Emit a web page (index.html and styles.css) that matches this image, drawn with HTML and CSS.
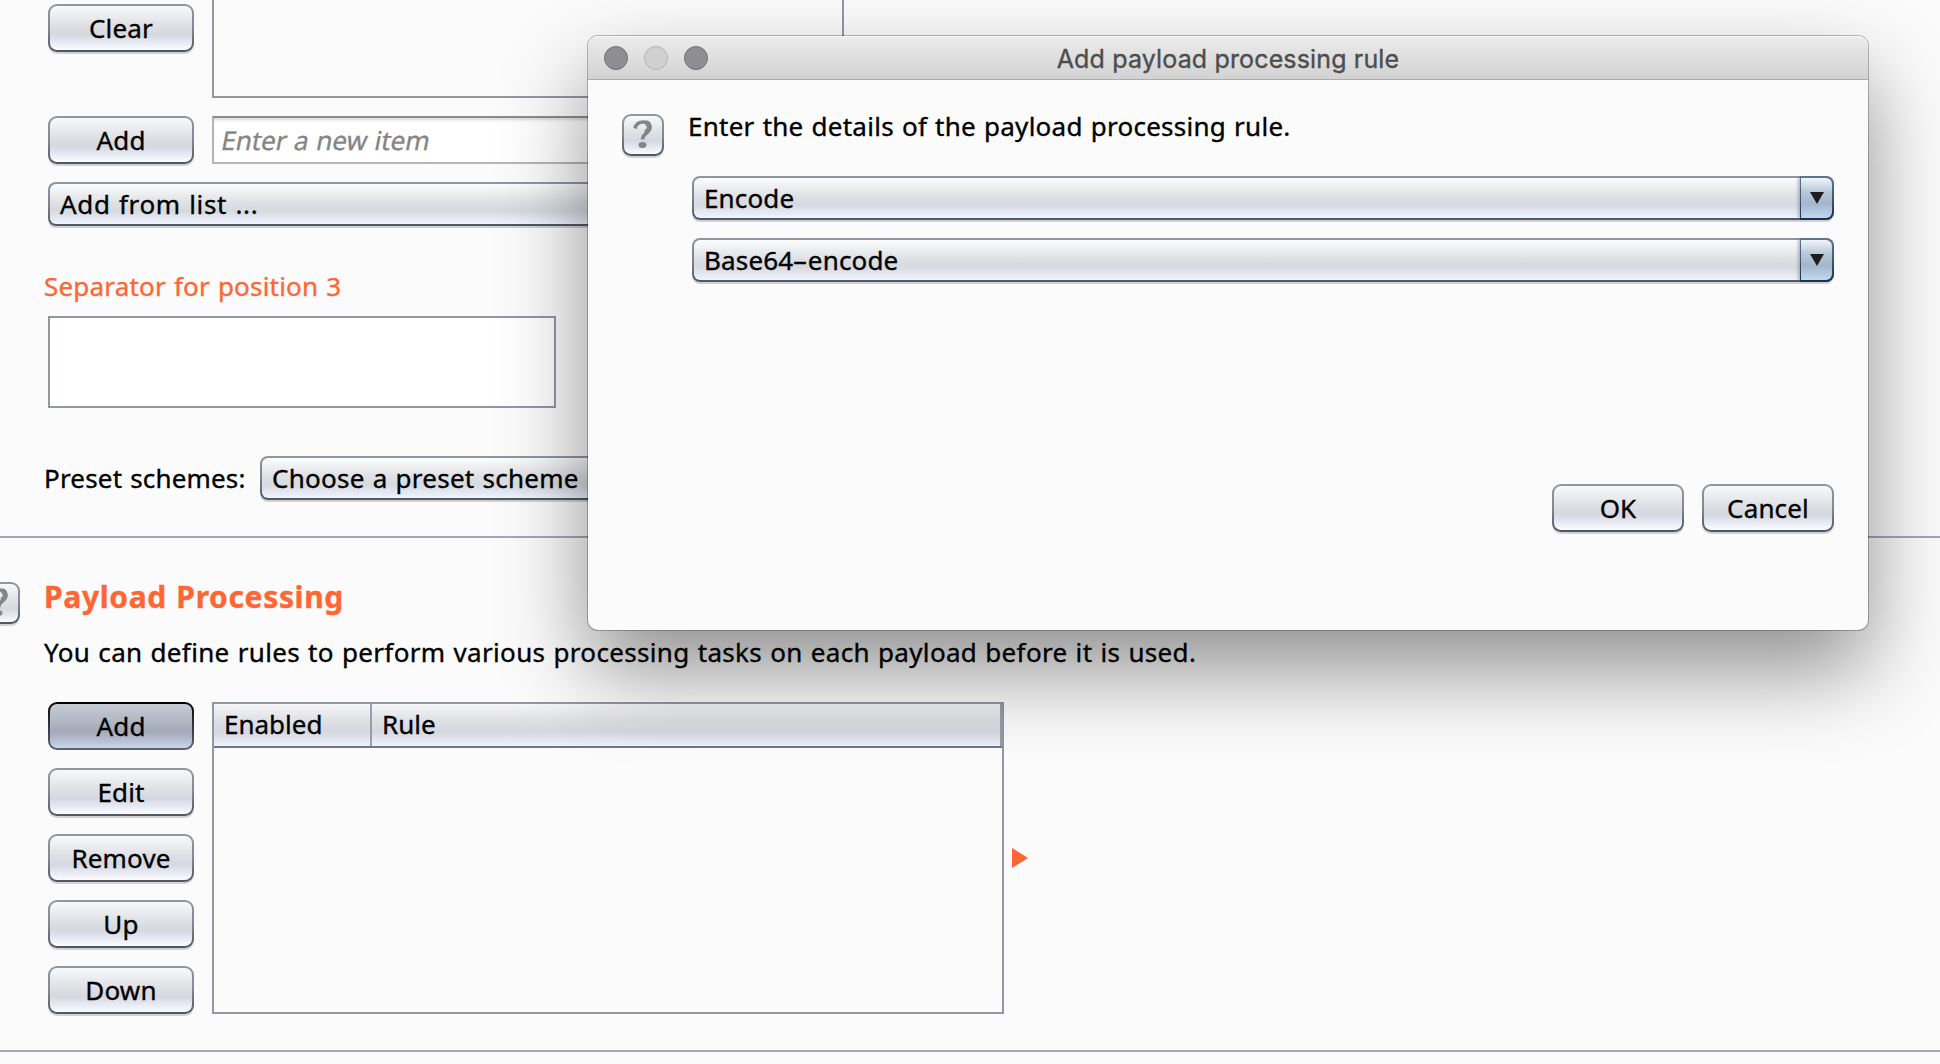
FILE: index.html
```
<!DOCTYPE html>
<html lang="en">
<head>
<meta charset="utf-8">
<title>Payload Processing</title>
<link rel="stylesheet" href="styles.css">
</head>
<body>
<main class="page">
  <section class="payload-set">
    <div class="row list-row">
      <button class="btn">Clear</button>
      <div class="item-list"></div>
    </div>
    <div class="row add-row">
      <button class="btn">Add</button>
      <div class="text-field"><span class="placeholder">Enter a new item</span></div>
    </div>
    <div class="select add-from"><span class="dots">Add from list ...</span></div>
    <h3 class="sub-title">Separator for position 3</h3>
    <div class="separator-box"></div>
    <div class="row preset-row">
      <span class="label">Preset schemes:</span>
      <div class="select preset">Choose a preset scheme</div>
    </div>
  </section>
  <hr class="rule">
  <section class="processing">
    <button class="help help-edge" aria-label="Help">
      <svg width="20" height="28" viewBox="0 0 20 28"><path d="M2 8.500C3 4 6 2 10.500 2C14.500 2 17 4 17 7.500C17 12.500 9.800 13 9.500 19.500" fill="none" stroke="#858585" stroke-width="3.600"/><path d="M13 2.500C15.500 3.500 16.500 5 16 8C15.500 10 14 11.500 12.500 12.500" fill="none" stroke="#858585" stroke-width="4.600"/><ellipse cx="9.500" cy="25" rx="4" ry="3" fill="#858585"/></svg>
    </button>
    <h2 class="title">Payload Processing</h2>
    <p class="lead">You can define rules to perform various processing tasks on each payload before it is used.</p>
    <div class="row rules">
      <div class="actions">
        <button class="btn pressed">Add</button>
        <button class="btn">Edit</button>
        <button class="btn">Remove</button>
        <button class="btn">Up</button>
        <button class="btn">Down</button>
      </div>
      <div class="table">
        <div class="thead">
          <div class="th th-enabled">Enabled</div>
          <div class="th th-rule">Rule</div>
        </div>
      </div>
      <svg class="arrow" width="16" height="20" viewBox="0 0 16 20"><path d="M0 0L16 10L0 20Z" fill="#ff6633"/></svg>
    </div>
  </section>
  <hr class="rule">
</main>

<div class="dialog">
  <header class="titlebar">
    <div class="lights">
      <span class="light"></span><span class="light off"></span><span class="light"></span>
    </div>
    <div class="dialog-title">Add payload processing rule</div>
  </header>
  <div class="dialog-body">
    <button class="help" aria-label="Help">
      <svg width="20" height="28" viewBox="0 0 20 28"><path d="M2 8.500C3 4 6 2 10.500 2C14.500 2 17 4 17 7.500C17 12.500 9.800 13 9.500 19.500" fill="none" stroke="#858585" stroke-width="3.600"/><path d="M13 2.500C15.500 3.500 16.500 5 16 8C15.500 10 14 11.500 12.500 12.500" fill="none" stroke="#858585" stroke-width="4.600"/><ellipse cx="9.500" cy="25" rx="4" ry="3" fill="#858585"/></svg>
    </button>
    <div class="form">
      <p class="prompt">Enter the details of the payload processing rule.</p>
      <div class="select has-knob"><span class="value">Encode</span>
        <span class="knob"><svg width="14" height="12" viewBox="0 0 14 12"><path d="M0 0H14L7 12Z" fill="#1e1e1e"/></svg></span>
      </div>
      <div class="select has-knob"><span class="value">Base64<span class="dash">-</span>encode</span>
        <span class="knob"><svg width="14" height="12" viewBox="0 0 14 12"><path d="M0 0H14L7 12Z" fill="#1e1e1e"/></svg></span>
      </div>
      <div class="dialog-actions">
        <button class="btn">OK</button>
        <button class="btn">Cancel</button>
      </div>
    </div>
  </div>
</div>
</body>
</html>
```
FILE: styles.css
```
* { box-sizing: border-box; }

body {
  margin: 0;
  width: 1940px;
  height: 1064px;
  overflow: hidden;
  position: relative;
  background: #fbfbfb;
  color: #000;
  font: 400 26px/36px "Noto Sans", "Open Sans", sans-serif;
  letter-spacing: .16px;
  word-spacing: 1px;
  -webkit-text-stroke: .35px currentColor;
}

h2, h3, p { margin: 0; }

.row { display: flex; }

/* Buttons */
.btn, .help {
  flex: none;
  padding: 0;
  border: 2px solid transparent;
  border-radius: 9px;
  color: inherit;
  font: inherit;
  letter-spacing: inherit;
  word-spacing: inherit;
  background:
    linear-gradient(#f8f9fa 0%, #dfe0e4 45%, #d5d8df 65%, #e6e9f3 82%, #fbfcff 100%) padding-box,
    linear-gradient(#94989d 0%, #85898f 50%, #50545c 100%) border-box;
  box-shadow: 0 2px 0 #d3d3d4;
}

.btn {
  width: 146px;
  height: 48px;
  line-height: 44px;
  text-align: center;
}

.btn.pressed {
  background:
    linear-gradient(#c6cad3 0%, #aeb4c1 45%, #a2a9b8 62%, #b9c2d3 85%, #ccd6e9 100%) padding-box,
    linear-gradient(#000 0%, #2a2e36 40%, #5b6473 100%) border-box;
  box-shadow: none;
}

.help {
  display: flex;
  align-items: center;
  justify-content: center;
  width: 42px;
  height: 42px;
}

.help svg { margin-top: -2px; }

/* Selects */
.select {
  display: flex;
  flex: none;
  height: 44px;
  padding-left: 10px;
  border: 2px solid transparent;
  border-radius: 8px;
  line-height: 40px;
  white-space: nowrap;
  background:
    linear-gradient(#fbfcfd 0%, #dfe1e5 45%, #d6d9de 67%, #e4e8f2 85%, #f0f4ff 100%) padding-box,
    linear-gradient(#9294a0 0%, #80838e 50%, #52565f 100%) border-box;
  box-shadow: 0 2px 0 #d0d1d4;
}

.knob {
  display: flex;
  align-items: center;
  justify-content: center;
  flex: none;
  width: 34px;
  height: 44px;
  margin: -2px -2px 0 auto;
  padding-bottom: 1px;
  border: 2px solid transparent;
  border-left-width: 1px;
  border-radius: 0 8px 8px 0;
  background:
    linear-gradient(#f0f5f9 0%, #b7c8d8 35%, #a2b6cc 64%, #c2d8f0 100%) padding-box,
    linear-gradient(#5d7691 0%, #3f5873 50%, #1b3047 100%) border-box;
  box-shadow: -3px 0 3px -1px rgba(90, 100, 115, .4);
  clip-path: inset(0 0 0 -5px);
}

.dash {
  display: inline-block;
  margin: 0 3px;
  transform: scaleX(1.8);
}

.dots { letter-spacing: .65px; }

/* Payload set section */
.payload-set {
  height: 536px;
  padding-left: 48px;
}

.list-row, .add-row { gap: 18px; }
.list-row { height: 98px; }
.list-row .btn { margin-top: 4px; }

.item-list {
  width: 632px;
  height: 98px;
  border: 2px solid #9396a3;
  border-top: 0;
}

.add-row { margin-top: 18px; }

.text-field {
  width: 632px;
  height: 48px;
  padding-left: 8px;
  border: 2px solid #b6b6b8;
  border-top-color: #8c8c8d;
  background: #fff;
  box-shadow: inset 0 3px 3px -1px #d8d8d8;
  line-height: 44px;
  color: #858585;
}

.placeholder {
  display: inline-block;
  letter-spacing: -.05px;
  transform: skewX(-11deg);
}

.add-from { width: 796px; margin-top: 18px; }

.sub-title {
  margin: 42px 0 0 -4px;
  font: inherit;
  letter-spacing: .2px;
  color: #ff6633;
}

.separator-box {
  width: 508px;
  height: 92px;
  margin-top: 12px;
  border: 2px solid #9396a3;
  background: #fff;
}

.preset-row { margin-top: 48px; }

.label {
  width: 216px;
  margin-left: -4px;
  line-height: 44px;
  letter-spacing: .18px;
}

.preset { width: 380px; letter-spacing: .26px; }

.rule {
  height: 2px;
  margin: 0;
  border: 0;
  background: #a5a8b3;
}

/* Payload processing section */
.processing {
  position: relative;
  height: 512px;
  padding: 39px 0 0 44px;
}

.help-edge {
  position: absolute;
  left: -22px;
  top: 44px;
}

.title {
  font-size: 30px;
  line-height: 40px;
  font-weight: 700;
  letter-spacing: .65px;
  color: #ff6633;
}

.lead { margin-top: 17px; letter-spacing: .335px; }

.rules {
  margin: 32px 0 0 4px;
  align-items: flex-start;
}

.actions {
  display: flex;
  flex-direction: column;
  gap: 18px;
}

.table {
  width: 792px;
  height: 312px;
  margin-left: 18px;
  border: 2px solid #9396a3;
}

.thead {
  display: flex;
  height: 44px;
  border-bottom: 2px solid #727680;
  background: linear-gradient(#f6f6f9 0%, #dfe0e4 40%, #d5d8df 66%, #eef2fc 100%);
}

.th { padding-left: 10px; line-height: 40px; letter-spacing: 0; border-right: 2px solid #9a9da8; }
.th-enabled { width: 158px; }
.th-rule { flex: 1; }

.arrow { margin: 146px 0 0 8px; }

/* Dialog window */
.dialog {
  position: absolute;
  left: 588px;
  top: 36px;
  width: 1280px;
  height: 594px;
  border-radius: 10px;
  background: #fbfbfb;
  box-shadow: 0 0 0 1px rgba(0, 0, 0, .26), 0 40px 86px rgba(0, 0, 0, .43);
}

.titlebar {
  display: grid;
  grid-template-columns: 120px 1fr 120px;
  height: 44px;
  border-radius: 10px 10px 0 0;
  border-bottom: 1px solid #ababab;
  background: linear-gradient(#ececec, #d2d2d2);
  box-shadow: inset 0 1px 0 #f8f8f8;
}

.lights {
  display: flex;
  gap: 16px;
  padding: 10px 0 0 16px;
}

.light {
  width: 24px;
  height: 24px;
  border: 1px solid #707074;
  border-radius: 50%;
  background: #8e8d92;
}

.light.off { border-color: #b4b4b4; background: #d0d0d0; }

.dialog-title {
  text-align: center;
  font: 400 25px/47px Inter, "Open Sans", sans-serif;
  letter-spacing: .15px;
  word-spacing: 0;
  color: #4d4d4d;
}

.dialog-body {
  display: flex;
  gap: 24px;
  padding: 28px 34px 0 34px;
}

.dialog-body .help { margin-top: 6px; }

.form {
  flex: 1;
  display: flex;
  flex-direction: column;
  padding: 0 0 0 4px;
}

.prompt { margin-left: -4px; letter-spacing: .26px; }
.form .select { margin-top: 18px; }
.form .prompt + .select { margin-top: 32px; }

.dialog-actions {
  display: flex;
  justify-content: flex-end;
  gap: 18px;
  margin-top: 202px;
}

.dialog-actions .btn { width: 132px; }
```
